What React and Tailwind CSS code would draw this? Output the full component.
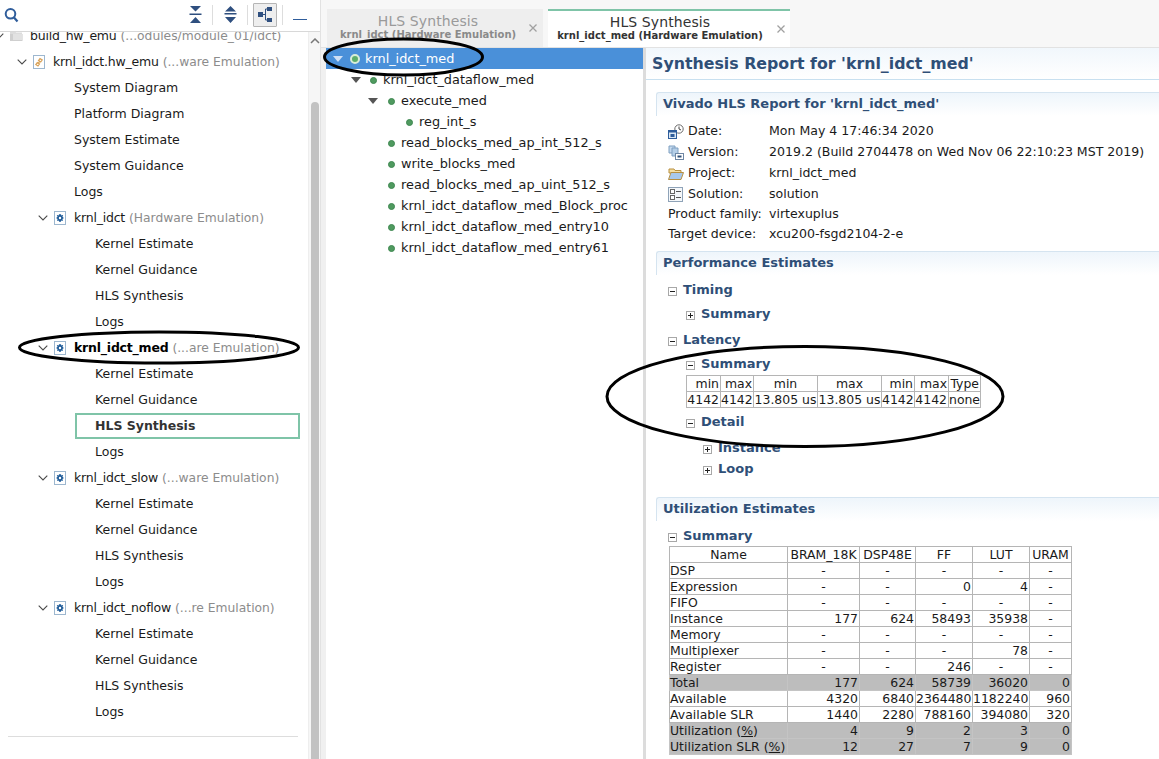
const NAVY = "#2f4f7f";

function Chevron() {
  return (
    <svg width="10" height="6" viewBox="0 0 10 6" className="shrink-0">
      <path d="M0.7 0.7 L5 5 L9.3 0.7" fill="none" stroke="#4a4a4a" strokeWidth="1.1" />
    </svg>
  );
}

function GearFile() {
  return (
    <svg width="12" height="14" viewBox="0 0 12 14" className="shrink-0">
      <rect x="0.5" y="0.5" width="11" height="13" fill="#fff" stroke="#9db7cf" />
      <path d="M6 3.2 L7 3.2 L7.3 4.4 L8.6 3.9 L9.2 4.7 L8.3 5.7 L9.5 6.5 L9.5 7.5 L8.3 8.1 L9 9.2 L8.3 9.9 L7.2 9.4 L6.9 10.8 L5.1 10.8 L4.8 9.4 L3.7 9.9 L3 9.2 L3.7 8.1 L2.5 7.5 L2.5 6.5 L3.7 5.7 L2.8 4.7 L3.4 3.9 L4.7 4.4 L5 3.2 Z" fill="#1f5c99" />
      <circle cx="6" cy="7" r="1.2" fill="#fff" />
    </svg>
  );
}

function LinkFile() {
  return (
    <svg width="12" height="14" viewBox="0 0 12 14" className="shrink-0">
      <rect x="0.5" y="0.5" width="11" height="13" fill="#fff" stroke="#9db7cf" />
      <path d="M2.8 9.6 L5 11 L6.5 9 L4.3 7.6 Z M5.5 5.6 L7.7 7 L9.2 5 L7 3.6 Z" fill="none" stroke="#d9a35a" strokeWidth="1.2" />
      <path d="M4.8 8.6 L7.2 6" stroke="#d9a35a" strokeWidth="1.2" />
    </svg>
  );
}

function FolderIcon() {
  return (
    <svg width="13" height="10" viewBox="0 0 13 10" className="shrink-0">
      <path d="M0 0 H5 L6 1.5 H12 V3 H0 Z" fill="#dcdcdc" />
      <rect x="0" y="3" width="12.5" height="7" fill="#cfcfcf" />
      <rect x="3" y="3" width="9.5" height="6" fill="#e2e2e2" />
    </svg>
  );
}

function LeftRow({ indent, chevron, icon, bold, name, note, selected }) {
  if (selected) {
    return (
      <div className="h-[26px] flex items-center">
        <div className="ml-[75px] w-[225px] h-[26px] border-2 border-[#7fc4a8] pl-[18px] flex items-center font-bold text-[#333333]">
          {name}
        </div>
      </div>
    );
  }
  const nameClass =
    (bold ? "font-bold text-black" : "text-[#1a1a1a]") + (chevron ? " tracking-[-0.22px]" : "");
  return (
    <div className="h-[26px] flex items-center whitespace-nowrap" style={{ paddingLeft: Math.max(indent, 0) }}>
      {chevron && (
        <span className="w-[16px] flex" style={{ marginLeft: Math.min(indent, 0) }}>
          <Chevron />
        </span>
      )}
      {icon && <span className="w-[20px] flex">{icon}</span>}
      <span className={nameClass}>{name}</span>
      {note && <span className="ml-[4px] text-[12.3px] text-[#8c8c8c]">{note}</span>}
    </div>
  );
}

function Kernel({ name, note, bold, selected }) {
  return (
    <>
      <LeftRow indent={38} chevron icon={<GearFile />} name={name} note={note} bold={bold} />
      <LeftRow indent={95} name="Kernel Estimate" />
      <LeftRow indent={95} name="Kernel Guidance" />
      <LeftRow indent={95} name="HLS Synthesis" selected={selected} />
      <LeftRow indent={95} name="Logs" />
    </>
  );
}

function Sep() {
  return <span className="block w-px h-[20px] bg-[#dddddd]" />;
}

function Toolbar() {
  return (
    <div className="h-[32px] shrink-0 border-b border-[#d8d8d8] flex items-center pb-[2px] bg-white relative">
      <svg width="15" height="16" viewBox="0 0 15 16" className="ml-[4px]">
        <circle cx="6.5" cy="6.8" r="4.8" fill="none" stroke="#2f5d9b" strokeWidth="2" />
        <path d="M10 10.5 L13.5 14.5" stroke="#2f5d9b" strokeWidth="2.2" />
      </svg>
      <svg width="13" height="17" viewBox="0 0 13 17" className="ml-[170px]">
        <path d="M1 0 H12 L6.5 5.5 Z M0.5 7.5 H12.5 V9 H0.5 Z M1 17 H12 L6.5 11 Z" fill={NAVY} />
      </svg>
      <span className="ml-[10px]"><Sep /></span>
      <svg width="13" height="17" viewBox="0 0 13 17" className="ml-[11px]">
        <path d="M6.5 0 L12 5.5 H1 Z M0.5 7 H12.5 V8.6 H0.5 Z M1 11 H12 L6.5 17 Z" fill={NAVY} />
      </svg>
      <span className="ml-[10px]"><Sep /></span>
      <span className="ml-[5px] w-[24px] h-[24px] border border-[#b5b5b5] bg-[#eeeeee] flex items-center justify-center rounded-[1px]">
        <svg width="15" height="15" viewBox="0 0 15 15">
          <path d="M0 5 H5 V10 H0 Z M9 0 H14 V4 H9 Z M9 11 H14 V15 H9 Z" fill={NAVY} />
          <path d="M5 7.5 H7.5 M7.5 2 V13 M7.5 2 H9 M7.5 13 H9" stroke={NAVY} fill="none" />
        </svg>
      </span>
      <span className="ml-[5px]"><Sep /></span>
      <span className="ml-[10px] mt-[10px] w-[14px] h-[1.5px] bg-[#2f5d9b]" />
    </div>
  );
}

function LeftPanel() {
  return (
    <div className="w-[320px] shrink-0 h-full flex flex-col bg-white">
      <Toolbar />
      <div className="flex-1 flex min-h-0">
        <div className="w-[308px] overflow-hidden text-[12.5px]">
          <div className="-mt-[9px]">
            <LeftRow indent={-6} chevron icon={<FolderIcon />} name="build_hw_emu" note="(...odules/module_01/idct)" />
            <LeftRow indent={17} chevron icon={<LinkFile />} name="krnl_idct.hw_emu" note="(...ware Emulation)" />
            <LeftRow indent={74} name="System Diagram" />
            <LeftRow indent={74} name="Platform Diagram" />
            <LeftRow indent={74} name="System Estimate" />
            <LeftRow indent={74} name="System Guidance" />
            <LeftRow indent={74} name="Logs" />
            <Kernel name="krnl_idct" note="(Hardware Emulation)" />
            <Kernel name="krnl_idct_med" note="(...are Emulation)" bold selected />
            <Kernel name="krnl_idct_slow" note="(...ware Emulation)" />
            <Kernel name="krnl_idct_noflow" note="(...re Emulation)" />
            <div className="mt-[11px] ml-[8px] w-[290px] h-px bg-[#dddddd]" />
          </div>
        </div>
        <div className="w-[12px] bg-[#f6f6f6] border-l border-[#eeeeee] flex flex-col items-center">
          <svg width="10" height="6" viewBox="0 0 10 6" className="mt-[6px]">
            <path d="M1 5 L5 1 L9 5" fill="none" stroke="#777777" strokeWidth="1.5" />
          </svg>
          <div className="mt-[58px] w-[8px] flex-1 rounded-t-[4px] bg-[#c2c2c2]" />
        </div>
      </div>
    </div>
  );
}

function Tab({ active, sub, width, closeGap }) {
  return (
    <div
      className={
        active
          ? "h-[38px] bg-white border-t-2 border-[#7fc4a8] flex items-center relative"
          : "h-[38px] bg-[#eeeeee] flex items-center"
      }
      style={{ width }}
    >
      <div className={active ? "flex-1 flex flex-col items-center leading-none mr-[5px] -mt-[3px]" : "flex-1 flex flex-col items-center leading-none -mt-[2px]"}>
        <span className={active ? "text-[14px] text-[#333333] tracking-[0.1px]" : "text-[14px] text-[#9a9a9a] tracking-[0.1px]"}>HLS Synthesis</span>
        <span className={active ? "mt-[2px] text-[10px] font-bold text-[#333333]" : "mt-[2px] text-[10px] font-bold text-[#8a8a8a]"}>{sub}</span>
      </div>
      <span style={{ marginRight: closeGap }}>
        <svg width="8" height="8" viewBox="0 0 8 8">
          <path d="M0.5 0.5 L7.5 7.5 M7.5 0.5 L0.5 7.5" stroke="#a0a0a0" strokeWidth="1.3" />
        </svg>
      </span>
    </div>
  );
}

function Triangle({ color = "#555555" }) {
  return (
    <svg width="10" height="6" viewBox="0 0 10 6" className="shrink-0">
      <path d="M0 0 H10 L5 6 Z" fill={color} />
    </svg>
  );
}

function Dot() {
  return <span className="w-[7px] h-[7px] rounded-full bg-[#4f9a5f] border border-[#3d8750] shrink-0" />;
}

function HierRow({ indent, text, triWidth }) {
  return (
    <div className="h-[21px] pt-[1px] flex items-center whitespace-nowrap text-[#1a1a1a]" style={{ paddingLeft: indent }}>
      {triWidth && (
        <span className="flex" style={{ width: triWidth }}>
          <Triangle />
        </span>
      )}
      <Dot />
      <span className="ml-[6px]">{text}</span>
    </div>
  );
}

function Hierarchy() {
  return (
    <div className="w-[317px] shrink-0 text-[12.85px] overflow-hidden bg-white">
      <div className="h-[21px] bg-[#4a90d9] flex items-center text-white pl-[7px]">
        <span className="w-[17px] flex"><Triangle color="#cfe0f5" /></span>
        <span className="w-[10px] h-[10px] rounded-full bg-[#5cae6a] border-2 border-[#d8ecd8] shrink-0" />
        <span className="ml-[5px]">krnl_idct_med</span>
      </div>
      <HierRow indent={25} triWidth={19} text="krnl_idct_dataflow_med" />
      <HierRow indent={42} triWidth={20} text="execute_med" />
      <HierRow indent={80} text="reg_int_s" />
      <HierRow indent={62} text="read_blocks_med_ap_int_512_s" />
      <HierRow indent={62} text="write_blocks_med" />
      <HierRow indent={62} text="read_blocks_med_ap_uint_512_s" />
      <HierRow indent={62} text="krnl_idct_dataflow_med_Block_proc" />
      <HierRow indent={62} text="krnl_idct_dataflow_med_entry10" />
      <HierRow indent={62} text="krnl_idct_dataflow_med_entry61" />
    </div>
  );
}

function Box({ plus }) {
  return (
    <svg width="9" height="9" viewBox="0 0 9 9" className="shrink-0 mt-[2px]">
      <rect x="0.5" y="0.5" width="8" height="8" fill="#fff" stroke="#a8a8a8" />
      <path d={plus ? "M2 4.5 H7 M4.5 2 V7" : "M2 4.5 H7"} stroke="#222222" />
    </svg>
  );
}

function Node({ indent, plus, text, mt, h = 16 }) {
  return (
    <div
      className="flex items-center font-bold text-[13px] text-[#2f4f77] whitespace-nowrap"
      style={{ paddingLeft: indent, marginTop: mt, height: h }}
    >
      <Box plus={plus} />
      <span className="ml-[6px]">{text}</span>
    </div>
  );
}

function SectionHeader({ children, mt }) {
  return (
    <div
      className="h-[24px] ml-[10px] pl-[6px] pb-[2px] flex items-center font-bold text-[13px] text-[#2f4f77] rounded-tl-[3px] border-t border-l border-[#d5e4f0] bg-gradient-to-b from-[#eef5fb] to-white"
      style={{ marginTop: mt }}
    >
      {children}
    </div>
  );
}

function InfoRow({ icon, label, value, h }) {
  return (
    <div className="flex items-center whitespace-nowrap text-[#1a1a1a]" style={{ height: h }}>
      <span className="w-[101px] flex items-center">
        {icon && <span className="w-[20px] flex">{icon}</span>}
        {label}
      </span>
      <span>{value}</span>
    </div>
  );
}

const IconDate = (
  <svg width="16" height="15" viewBox="0 0 16 15">
    <circle cx="11" cy="5" r="4.2" fill="#fff" stroke="#6b6b6b" />
    <path d="M11 2.5 V5 L13 6" stroke="#444444" fill="none" />
    <rect x="0.5" y="6.5" width="8" height="8" fill="#dbe8f5" stroke="#2f5d9b" />
    <rect x="0.5" y="6.5" width="8" height="2" fill="#2f5d9b" />
    <rect x="2.5" y="10" width="4" height="3" fill="#2f5d9b" />
  </svg>
);
const IconVersion = (
  <svg width="16" height="15" viewBox="0 0 16 15">
    <path d="M1 1 H7 V8 H1 Z" fill="#c5daef" stroke="#7f9fc0" />
    <path d="M4 3 H10 V11 H4 Z" fill="#b5cfe8" stroke="#7f9fc0" />
    <rect x="7.5" y="8.5" width="8" height="6" fill="#fff" stroke="#6d86a3" />
    <rect x="9.5" y="10.5" width="4" height="2" fill="#2f4f77" />
  </svg>
);
const IconFolder = (
  <svg width="16" height="13" viewBox="0 0 16 13">
    <path d="M1 2 L6 2 L7 3.5 L13 3.5 V6 H1 Z" fill="#f5dfa3" stroke="#b88f3f" />
    <path d="M0.5 12.5 L3 5.5 H15.5 L13 12.5 Z" fill="#a9c8ea" stroke="#b88f3f" />
  </svg>
);
const IconSolution = (
  <svg width="15" height="15" viewBox="0 0 15 15">
    <rect x="0.5" y="0.5" width="14" height="14" fill="#f4f7fa" stroke="#8fa3b8" />
    <rect x="2.5" y="2.5" width="4" height="4" fill="#fff" stroke="#666666" />
    <rect x="2.5" y="8.5" width="4" height="4" fill="#fff" stroke="#666666" />
    <path d="M8 4.5 H13 M8 10.5 H13" stroke="#555555" />
  </svg>
);

const borderCell = "border border-[#b5b5b5] p-0 h-[16px] leading-[14px]";

function LatencyTable() {
  const head = ["min", "max", "min", "max", "min", "max", "Type"];
  const vals = ["4142", "4142", "13.805 us", "13.805 us", "4142", "4142", "none"];
  const widths = [34, 33, 64, 64, 33, 34, 32];
  const align = (i) => (i === 2 || i === 3 ? " text-center" : " text-right pr-[1px]");
  return (
    <table className="ml-[40px] mt-[3px] border-collapse table-fixed text-[12.45px] text-[#1a1a1a] whitespace-nowrap" style={{ width: 294 }}>
      <colgroup>
        {widths.map((w, i) => <col key={i} style={{ width: w }} />)}
      </colgroup>
      <tbody>
        <tr>{head.map((t, i) => <td key={i} className={borderCell + align(i)}>{t}</td>)}</tr>
        <tr>{vals.map((t, i) => <td key={i} className={borderCell + align(i)}>{t}</td>)}</tr>
      </tbody>
    </table>
  );
}

const UTIL = [
  ["DSP", "-", "-", "-", "-", "-"],
  ["Expression", "-", "-", "0", "4", "-"],
  ["FIFO", "-", "-", "-", "-", "-"],
  ["Instance", "177", "624", "58493", "35938", "-"],
  ["Memory", "-", "-", "-", "-", "-"],
  ["Multiplexer", "-", "-", "-", "78", "-"],
  ["Register", "-", "-", "246", "-", "-"],
  ["Total", "177", "624", "58739", "36020", "0", true],
  ["Available", "4320", "6840", "2364480", "1182240", "960"],
  ["Available SLR", "1440", "2280", "788160", "394080", "320"],
  [<>Utilization (<u>%</u>)</>, "4", "9", "2", "3", "0", true],
  [<>Utilization SLR (<u>%</u>)</>, "12", "27", "7", "9", "0", true],
];

function UtilTable() {
  const widths = [118, 72, 56, 57, 57, 42];
  const head = ["Name", "BRAM_18K", "DSP48E", "FF", "LUT", "URAM"];
  return (
    <table className="ml-[23px] mt-[2px] border-collapse table-fixed text-[12.45px] text-[#1a1a1a] whitespace-nowrap" style={{ width: 402 }}>
      <colgroup>
        {widths.map((w, i) => <col key={i} style={{ width: w }} />)}
      </colgroup>
      <tbody>
        <tr>{head.map((t, i) => <td key={i} className={borderCell + " text-center"}>{t}</td>)}</tr>
        {UTIL.map((row, r) => {
          const gray = row[6] === true;
          return (
            <tr key={r} className={gray ? "bg-[#bdbdbd]" : ""}>
              {row.slice(0, 6).map((c, i) => (
                <td
                  key={i}
                  className={
                    borderCell +
                    (i === 0 ? " text-left" : c === "-" ? " text-center" : " text-right pr-[1px]") +
                    (gray ? " border-[#c4c4c4]" : "")
                  }
                >
                  {c}
                </td>
              ))}
            </tr>
          );
        })}
      </tbody>
    </table>
  );
}

function Report() {
  return (
    <div className="flex-1 min-w-0 overflow-hidden text-[12.55px] bg-white">
      <div className="h-[32px] border-b border-[#c8e0f0] bg-gradient-to-b from-[#f1f7fc] to-white flex items-center pl-[6px] font-bold text-[15.8px] text-[#2f4f77] whitespace-nowrap">
        Synthesis Report for 'krnl_idct_med'
      </div>
      <SectionHeader mt={12}>Vivado HLS Report for 'krnl_idct_med'</SectionHeader>
      <div className="ml-[22px] mt-[5px]">
        <InfoRow h={21} icon={IconDate} label="Date:" value="Mon May 4 17:46:34 2020" />
        <InfoRow h={21} icon={IconVersion} label="Version:" value="2019.2 (Build 2704478 on Wed Nov 06 22:10:23 MST 2019)" />
        <InfoRow h={21} icon={IconFolder} label="Project:" value="krnl_idct_med" />
        <InfoRow h={21} icon={IconSolution} label="Solution:" value="solution" />
        <InfoRow h={19} label="Product family:" value="virtexuplus" />
        <InfoRow h={20} label="Target device:" value="xcu200-fsgd2104-2-e" />
      </div>
      <SectionHeader mt={7}>Performance Estimates</SectionHeader>
      <Node indent={22} text="Timing" mt={7} />
      <Node indent={40} plus text="Summary" mt={8} />
      <Node indent={22} text="Latency" mt={10} />
      <Node indent={40} text="Summary" mt={8} />
      <LatencyTable />
      <Node indent={40} text="Detail" mt={6} />
      <Node indent={57} plus text="Instance" mt={10} />
      <Node indent={57} plus text="Loop" mt={5} />
      <SectionHeader mt={20}>Utilization Estimates</SectionHeader>
      <Node indent={22} text="Summary" mt={7} />
      <UtilTable />
    </div>
  );
}

function Overlay() {
  return (
    <svg width="1159" height="759" viewBox="0 0 1159 759" className="absolute inset-0 pointer-events-none">
      <g fill="none" stroke="#000000" strokeWidth="3">
        <ellipse cx="159" cy="347.5" rx="139.5" ry="15.5" />
        <ellipse cx="403.5" cy="57" rx="79" ry="18" />
        <ellipse cx="805" cy="396.5" rx="198" ry="50" />
      </g>
    </svg>
  );
}

export default function App() {
  return (
    <div
      className="relative w-[1159px] h-[759px] overflow-hidden flex bg-white text-[#1a1a1a]"
      style={{ fontFamily: '"DejaVu Sans", sans-serif' }}
    >
      <LeftPanel />
      <div className="flex-1 min-w-0 h-full flex flex-col">
        <div className="h-[48px] shrink-0 bg-[#f7f7f7] border-b border-[#bdbdbd] pt-[9px] flex pl-[6px] border-l border-[#e2e2e2]">
          <Tab sub="krnl_idct (Hardware Emulation)" width={216} closeGap={6} />
          <span className="w-[5px]" />
          <Tab active sub="krnl_idct_med (Hardware Emulation)" width={242} closeGap={5} />
        </div>
        <div className="flex-1 min-h-0 flex">
          <div className="w-[6px] shrink-0 bg-[#f0f0f0] border-l border-[#e2e2e2]" />
          <Hierarchy />
          <div className="w-[3px] shrink-0 bg-[#dcdcdc]" />
          <Report />
        </div>
      </div>
      <Overlay />
    </div>
  );
}
